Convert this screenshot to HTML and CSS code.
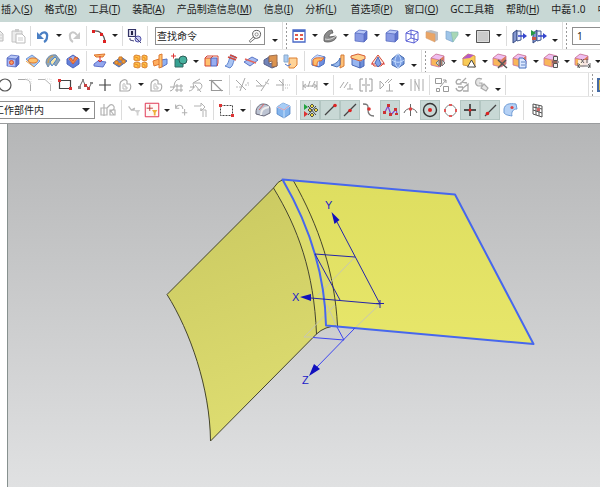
FILE: index.html
```html
<!DOCTYPE html>
<html lang="zh-CN">
<head>
<meta charset="utf-8">
<title>建模</title>
<link rel="stylesheet" href="styles.css">
</head>
<body>
<svg class="sprite" aria-hidden="true">
  <defs>
    <linearGradient id="sheetLeft" x1="0" y1="0" x2="0.2" y2="1"><stop offset="0" stop-color="#c9c860"/><stop offset="1" stop-color="#dddc70"/></linearGradient>
    <linearGradient id="sheetRight" x1="0" y1="0" x2="0" y2="1"><stop offset="0" stop-color="#dede60"/><stop offset="1" stop-color="#e7e66a"/></linearGradient>
  </defs>
  <symbol id="copy" viewBox="0 0 20 20"><path d="M6 5h6l3 3v7H6z" fill="#eee" stroke="#bbb"/><path d="M8 9h6M8 12h6" stroke="#ccc"/></symbol>
  <symbol id="paste" viewBox="0 0 20 20"><path d="M4 5h10v11H4z" fill="#ececec" stroke="#c4c4c4"/><path d="M7 3h4v3H7z" fill="#ccc"/><path d="M8 8h6l3 3v6H8z" fill="#fff" stroke="#bbb"/><path d="M10 12h5M10 14h5" stroke="#ccc"/></symbol>
  <symbol id="undo" viewBox="0 0 20 20"><path d="M7 9C11 4 15 7 14 11c0 2-1 4-3 5" fill="none" stroke="#4a7fc4" stroke-width="2.2"/><path d="M4 6v7h7z" fill="#4a7fc4"/></symbol>
  <symbol id="redo" viewBox="0 0 20 20"><path d="M13 9C9 4 5 7 6 11c0 2 1 4 3 5" fill="none" stroke="#c8c8c8" stroke-width="2"/><path d="M16 6v7H9z" fill="#c8c8c8"/></symbol>
  <symbol id="arc" viewBox="0 0 20 20"><path d="M4 5c7-1 11 3 12 11" fill="none" stroke="#555" stroke-width="1.3"/><path d="M3 4h3v3H3zM11 7h3v3h-3zM14 14h3v3h-3z" fill="#d22"/></symbol>
  <symbol id="wcs" viewBox="0 0 20 20"><path d="M3.500 3.500h7v7h-7z" fill="#dde" stroke="#336" stroke-width="1.2"/><path d="M6 5h2v4H6z" fill="#224"/><circle cx="13" cy="13" r="3" fill="#c6c8f0" stroke="#55a"/><path d="M5 12v2l4 1M10 11l6 6" fill="none" stroke="#447"/></symbol>
  <symbol id="fit" viewBox="0 0 20 20"><path d="M4 4h12v12H4z" fill="#fff" stroke="#4a6ac8" stroke-width="1.3"/><path d="M4 4h12v2H4z" fill="#4a6ac8"/><path d="M6 8h3v2H6zM11 8h3v2h-3zM6 12h3v2H6zM11 12h3v2h-3z" fill="#e0584a"/></symbol>
  <symbol id="orient" viewBox="0 0 20 20"><path d="M4 12c0-4 4-8 8-8l1 3c-3 0-4 2-4 4l7-1v2c-2 4-10 5-12 3z" fill="#8c8c8c" stroke="#555" stroke-width=".8"/><path d="M5 13c4 1 7 0 11-3" stroke="#ddd" fill="none"/></symbol>
  <symbol id="cube" viewBox="0 0 20 20"><path d="m4 7 4-3 8 1v8l-3 3-9-1z" fill="#8799e3"/><path d="m4 7 4-3 8 1-3 3z" fill="#b6c5f5"/><path d="m13 8 3-3v8l-3 3z" fill="#5f73cc"/><path d="m4 7 4-3 8 1v8l-3 3-9-1zM4 7l9 1v8M13 8l3-3" fill="none" stroke="#5065bd" stroke-width=".7"/></symbol>
  <symbol id="wire" viewBox="0 0 20 20"><path d="m4 7 5-3 7 2v8l-4 3-8-2zM4 7l8 2v8M12 9l4-3M9 4v8l-5 3M9 12l7 2" fill="none" stroke="#4a50d0" stroke-width=".9"/></symbol>
  <symbol id="section" viewBox="0 0 20 20"><path d="m4 5 5-1 7 2v8l-4 2V9L4 8z" fill="#b9bdc4"/><path d="m4 6 9 2v8l-9-4z" fill="#eaa565" stroke="#d8a070" stroke-width=".6"/></symbol>
  <symbol id="section2" viewBox="0 0 20 20"><path d="m4 5 7 2v9l-7-3z" fill="#9fc5e8" stroke="#7ba4cc" stroke-width=".7"/><path d="m9 6 7 0v3l-5 7z" fill="#a9d7b5" stroke="#8bb" stroke-width=".7"/></symbol>
  <symbol id="swatch" viewBox="0 0 20 20"><path d="M3.500 4.500h13v12h-13z" fill="#cacaca" stroke="#555"/><path d="M4.500 5.500h11v10h-11z" fill="none" stroke="#eee" stroke-width=".5"/></symbol>
  <symbol id="door" viewBox="0 0 20 20"><path d="m4 7 4-3v10l-4 3z" fill="#8497cf" stroke="#354982"/><path d="M8 5h4v9l-4 1z" fill="#e8edff" stroke="#445b91"/><path d="M9 10h6" stroke="#34c" stroke-width="1.5"/><path d="m14 7 4 3-4 3z" fill="#34c"/></symbol>
  <symbol id="door2" viewBox="0 0 20 20"><use href="#door"/><path d="m2 4 5 3-5 3z" fill="#259a42"/><path d="M3 11h4v3H3z" fill="#c54"/></symbol>
  <symbol id="search" viewBox="0 0 20 20"><circle cx="12" cy="8" r="5" fill="none" stroke="#555" stroke-width="1.2"/><circle cx="12" cy="8" r="2" fill="none" stroke="#777"/><path d="m8 11-5 5 1 2 6-5" fill="none" stroke="#555"/></symbol>

  <symbol id="extrude" viewBox="0 0 20 20"><use href="#cube"/><path d="M5 9h7v6H5z" fill="#aab8f3"/><circle cx="8.500" cy="11.500" r="2" fill="#f2a067" stroke="#d64a35"/></symbol>
  <symbol id="pad" viewBox="0 0 20 20"><path d="m3 8 6-4 8 6-6 6z" fill="#a9cbf5" stroke="#5c85cc" stroke-width=".8"/><ellipse cx="10" cy="9.500" rx="4.500" ry="2.500" fill="#ffc16a" stroke="#e47828"/><path d="m3 10 8 6" stroke="#e5a24c"/></symbol>
  <symbol id="shell" viewBox="0 0 20 20"><path d="M3 12c0-6 5-9 10-8l4 5-4 6c-3-3-6-3-8 1z" fill="#8ea5ba" stroke="#607c9b" stroke-width=".8"/><path d="m7 11 5-5 2 2-5 7z" fill="#f6e6ac" stroke="#4a86cd"/><path d="M5 12c0-4 2-6 5-7" fill="none" stroke="#e59b32"/></symbol>
  <symbol id="chamfer" viewBox="0 0 20 20"><path d="m4 8 6-4 6 4v5l-6 4-6-4z" fill="#637fd8" stroke="#4c66bd"/><path d="m5 8 5-3 5 3-5 5z" fill="#a9baf0"/><path d="m6 8 4 5 5-6-3-1-2 4-2-3z" fill="#ef8846" stroke="#d64c22" stroke-width=".8"/></symbol>
  <symbol id="project" viewBox="0 0 20 20"><path d="m4 4 11-1-2 3H6z" fill="#f9b36a" stroke="#df742d"/><path d="m4 13 4-3 8 1-3 5-9-1z" fill="#94a7ee" stroke="#5f73ca"/><path d="M10 5v6M8 9l2 2 2-2" fill="none" stroke="#d42f30"/></symbol>
  <symbol id="bumps" viewBox="0 0 20 20"><path d="m3 12 8-6 6 4-8 6z" fill="#6386d0" stroke="#4e6faf"/><path d="M5 10h3v3H5zM9 6h3v3H9zM12 9h3v3h-3zM8 12h3v2H8z" fill="#f4a13d" stroke="#d47a21"/></symbol>
  <symbol id="pattern" viewBox="0 0 20 20"><path d="m4 5 2-1 4 1v4L8 10 4 9zM12 5l2-1 3 1v4l-2 1-3-1zM4 12l2-1 4 1v4l-2 1-4-1zM12 12l2-1 3 1v4l-2 1-3-1z" fill="#ffc145" stroke="#d98133"/><path d="m5 6 3 1v2M13 6l2 1v2M5 13l3 1v2M13 13l2 1v2" fill="none" stroke="#eb8a2d"/></symbol>
  <symbol id="mirror" viewBox="0 0 20 20"><path d="m3 10 6-2 1 5-6 2z" fill="#ffae60" stroke="#df762f"/><path d="m11 9 6-1v5l-5 3z" fill="#8fb1f1" stroke="#5774c5"/><path d="m9 4 3-1v13l-3 1z" fill="#ffc36d" stroke="#df7a35"/></symbol>
  <symbol id="unite" viewBox="0 0 20 20"><path d="M5 8h8v8H5z" fill="#35a192" stroke="#376b65"/><circle cx="13" cy="9" r="4" fill="#47b19e" stroke="#2e5d58"/><path d="M1 5h5M3.500 2.500v5" stroke="#d33"/></symbol>
  <symbol id="boxes" viewBox="0 0 20 20"><path d="M4 7h6v8H4z" fill="#ffc16f" stroke="#d34634"/><path d="M10 7h6v8h-6z" fill="#98adf1" stroke="#5168c1"/><path d="m4 7 2-2h11v7l-1 3M10 7l2-2" fill="none" stroke="#d34634"/></symbol>
  <symbol id="ribbon" viewBox="0 0 20 20"><path d="M4 15c4-1 4-9 6-11l5 2c-3 2-2 9-6 11z" fill="#a9c4f2" stroke="#6185d0"/><path d="m7 6 8 3M9 4l7 3" stroke="#d34839" stroke-width="1.400"/></symbol>
  <symbol id="split" viewBox="0 0 20 20"><path d="m3 11 8-5 6 3-8 6z" fill="#a6bcf3" stroke="#5975c5"/><path d="m4 8 11 4" stroke="#e2655d" stroke-width="1.500"/></symbol>
  <symbol id="cup" viewBox="0 0 20 20"><path d="m3 9 5-3v7l8-2v4l-5 2-8-4z" fill="#7183b7" stroke="#565f87"/><path d="m8 5 8-1v11l-5 1v-6l-3 1z" fill="#dc9450" stroke="#9d6e4e"/></symbol>
  <symbol id="trim" viewBox="0 0 20 20"><path d="M8 7h8v7l-3 3H8z" fill="#ffd397" stroke="#dc7e30"/><path d="M3 4h4v7H3z" fill="#acccf2" stroke="#88a9cc"/><path d="m4 13 3 2 3-2" fill="none" stroke="#5276c7"/></symbol>
  <symbol id="blend" viewBox="0 0 20 20"><path d="m4 8 5-4 8 2-1 7-5 3-7-2z" fill="#6e8ddd" stroke="#496bbd"/><path d="m4 8 5-4 7 2-5 3v6l-6-1z" fill="#c3d6fb"/><path d="M5 9c2-3 6-2 11-2l-3 3c-3-1-4 1-4 5l-4-1z" fill="#ffbd67" stroke="#df6a31"/></symbol>
  <symbol id="corner" viewBox="0 0 20 20"><path d="M13 4h3v11l-4 2z" fill="#ffbf74" stroke="#d47c38"/><path d="M3 14c5-1 8-4 9-7v7l-3 2z" fill="#96b8ed" stroke="#4b72b6"/></symbol>
  <symbol id="sheetbox" viewBox="0 0 20 20"><path d="m4 6 8 2v9l-8-3z" fill="#98b6f0" stroke="#4a68b5"/><path d="m3 5 7-2 7 2v3l-5 2-9-3z" fill="#ffd28c" stroke="#d45c36"/><path d="M12 11v6l4-2V8" fill="#6e8fd8" stroke="#4b67b8"/></symbol>
  <symbol id="fan" viewBox="0 0 20 20"><path d="m4 12 6-8 6 8-3 3H6z" fill="#fbe7df" stroke="#d34a35"/><path d="m7 12 3-6 3 7-3 3z" fill="#83a3e7" stroke="#4c68b7"/><path d="M3 13h4M13 13h4" stroke="#d44"/></symbol>
  <symbol id="sphere" viewBox="0 0 20 20"><path d="m4 8 6-5 6 4v6l-6 4-6-3z" fill="#789ce1" stroke="#4166ac"/><path d="M4 9c4 3 8 3 12 0M10 3c-4 4-4 10 0 14M10 3c4 4 4 10 0 14" fill="none" stroke="#c4dcff"/></symbol>
  <symbol id="pink" viewBox="0 0 20 20"><path d="m3 7 5-4 8 2v8l-5 3-8-2z" fill="#f9b65a"/><path d="m3 7 5-4 8 2-5 4z" fill="#efbef1"/><path d="m11 9 5-4v8l-5 3z" fill="#d8795c"/><path d="m3 7 5-4 8 2v8l-5 3-8-2zM3 7l8 2v7" fill="none" stroke="#c6709d" stroke-width=".8"/></symbol>
  <symbol id="pinkmove" viewBox="0 0 20 20"><use href="#pink"/><path d="m8 12 3-3v6zM17 12l-3-3v6z" fill="#ddd" stroke="#777"/><path d="M12.500 8v8" stroke="#666"/></symbol>
  <symbol id="pinktri" viewBox="0 0 20 20"><path d="m4 7 5-4 7 2v11L4 14z" fill="#f8cb57" stroke="#d59a45"/><path d="m3 8 6-5 6 1-4 3z" fill="#b55bc5"/><path d="m12.500 9 4 7h-8z" fill="#fff" stroke="#444"/></symbol>
  <symbol id="pinkx" viewBox="0 0 20 20"><use href="#pink"/><path d="m8 9 9 8M16 9l-8 8" stroke="#555" stroke-width="1.500"/></symbol>
  <symbol id="pinkpage" viewBox="0 0 20 20"><use href="#pink"/><path d="M9 7h4l3 3v7H9z" fill="#dce8ff" stroke="#446fbd"/><path d="M11 11h4M11 14h4" stroke="#6386c5"/></symbol>
  <symbol id="pinkboxes" viewBox="0 0 20 20"><use href="#pink"/><path d="M12.500 5.500h4v4h-4zM12.500 12.500h4v4h-4z" fill="#eee" stroke="#555"/><path d="M11 11h7" stroke="#555"/></symbol>
  <symbol id="pinkdim" viewBox="0 0 20 20"><use href="#pink"/><path d="M6 9h12v8H6z" fill="#fff" opacity=".8"/><path d="m9 8 3 4M12 8l-3 4M15 8v4M6 12v5M18 12v5M6 15h12M8 13l-2 2 2 2M16 13l2 2-2 2" fill="none" stroke="#555" stroke-width=".9"/></symbol>

  <symbol id="circle" viewBox="0 0 20 20"><circle cx="10" cy="10" r="6" fill="none" stroke="#555" stroke-width="1.2"/></symbol>
  <symbol id="fillet" viewBox="0 0 20 20"><path d="M3 4.500h7c4 0 5 2 5.500 5V16" fill="none" stroke="#aaa"/><path d="M10 4h6v6" fill="none" stroke="#ddd" stroke-dasharray="1 1"/></symbol>
  <symbol id="cham" viewBox="0 0 20 20"><path d="M3 4.500h7l5.500 5V16" fill="none" stroke="#b6b6b6"/><path d="M10 4h6v6" fill="none" stroke="#ddd" stroke-dasharray="1 1"/></symbol>
  <symbol id="rect" viewBox="0 0 20 20"><path d="M4.500 5.500h11v8h-11z" fill="none" stroke="#444" stroke-width="1.200"/><path d="M3 4h3v3H3zM14 12h3v3h-3z" fill="#d33"/></symbol>
  <symbol id="profile" viewBox="0 0 20 20"><path d="m4 13 4-8 2 5 4 3 3-6" fill="none" stroke="#666"/><path d="M9 9h3v3H9zM12 12h3v3h-3z" fill="#c84040"/><path d="M3 11h3v3H3zM7 4h2v3H7zM15 7h3v2h-3z" fill="#888"/></symbol>
  <symbol id="plus" viewBox="0 0 20 20"><path d="M4 10h12M10 4v12" stroke="#444" stroke-width="1.200"/></symbol>
  <symbol id="offset" viewBox="0 0 20 20"><path d="M5 16V9c0-3 5-6 7-3v3h3c2 3 0 7-2 7z" fill="none" stroke="#aaa" stroke-width="1.200"/><path d="M8 13v-3c0-2 2-2 2 0v2h2v2H8z" fill="none" stroke="#bbb"/></symbol>
  <symbol id="curvegrid" viewBox="0 0 20 20"><path d="M4 16c7-1 1-11 10-12M4 12h5" fill="none" stroke="#aaa"/><path d="M10 10h2v2h-2zM14 10h2v2h-2zM10 14h2v2h-2zM14 14h2v2h-2z" fill="none" stroke="#aaa"/></symbol>
  <symbol id="curvemir" viewBox="0 0 20 20"><path d="M3 16c5-1 5-4 4-8l7-4M8 8h6c4 2 1 8-3 7M9 10l6 7M4 12h5" fill="none" stroke="#aaa"/></symbol>
  <symbol id="cross" viewBox="0 0 20 20"><path d="M3 5.500h13M5.500 5v10.500H17M5 5l11 11" fill="none" stroke="#999" stroke-width="1.200"/></symbol>
  <symbol id="qtrim" viewBox="0 0 20 20"><path d="m3 5 10 10M12 3 7 16" stroke="#aaa"/><path d="M12 10h4M14 8h3M3 12h5" stroke="#bbb" stroke-dasharray="2 1"/></symbol>
  <symbol id="qext" viewBox="0 0 20 20"><path d="m3 5 6 6M16 4l-8 12M3 11h8" stroke="#aaa"/><path d="m12 7 4 2" stroke="#bbb"/></symbol>
  <symbol id="corner2" viewBox="0 0 20 20"><path d="M3 10h8M10 4v12M6 5l5 5" stroke="#aaa"/><path d="M12 10h5M12 13h3" stroke="#bbb" stroke-dasharray="1 1"/></symbol>
  <symbol id="dim" viewBox="0 0 20 20"><path d="M3 6v9M17 6v9M3 11h14M6 9l-3 2 3 2M14 9l3 2-3 2M8 12l2-6M12 12l3-6" fill="none" stroke="#aaa"/></symbol>
  <symbol id="perp" viewBox="0 0 20 20"><path d="m4 13 4-6M8 13l4-6M11 14h6M14 9v5" stroke="#aaa"/></symbol>
  <symbol id="sym" viewBox="0 0 20 20"><path d="M7 4H4v12h3M13 4h3v12h-3M10 3v14M6 10h3M14 10h-3" fill="none" stroke="#999"/></symbol>
  <symbol id="show" viewBox="0 0 20 20"><path d="M4 6v8l4-4zM9 8l4-4M12 8l4-4M10 16h7M13.500 9v7" fill="none" stroke="#aaa"/></symbol>
  <symbol id="ladder" viewBox="0 0 20 20"><path d="M4 4v12M8 4v12M12 4v12M16 4v12M8 6l4 8" fill="none" stroke="#aaa"/></symbol>
  <symbol id="convert" viewBox="0 0 20 20"><path d="M3.500 3.500h6v5h-6zM4.500 13.500h3v3h-3zM11.500 11.500h5v5h-5zM8 12l6-7h-3M14 5v3" fill="none" stroke="#999"/></symbol>
  <symbol id="alt" viewBox="0 0 20 20"><path d="M9 5c-4-2-6 2-4 4h4V7M14 3l-4 4 5 1M4 13c1 4 6 4 7 0l5-4v7h-5M6 12h5" fill="none" stroke="#aaa" stroke-width="1.300"/></symbol>
  <symbol id="infer" viewBox="0 0 20 20"><path d="M10 4c-7-3-8 5-4 7h4V8H7M12 9l4 4-2 3-5-3z" fill="#e5e5e5" stroke="#aaa" stroke-width="1.200"/></symbol>
  <symbol id="bluebar" viewBox="0 0 20 20"><path d="M3 4h9v12H3z" fill="#d8b64c" stroke="#456ba5" stroke-width="2"/></symbol>

  <symbol id="asm" viewBox="0 0 20 20"><path d="M3 8h6v7H3zM6 4v12M9 8l3-3M11 6c3-3 6 0 5 3l-3 2M12 10l4 5M12 10h5v5h-5z" fill="none" stroke="#b3b3b3" stroke-width="1.200"/></symbol>
  <symbol id="filt" viewBox="0 0 20 20"><path d="m4 6 3 4 4-2M7 10h4" fill="none" stroke="#bbb" stroke-width="1.500"/><path d="M10 10h7l-2 3v3h-2v-3z" fill="#d2d2d2"/></symbol>
  <symbol id="filtred" viewBox="0 0 20 20"><path d="M2.500 2.500h15v15h-15z" fill="#fff8f6" stroke="#d24"/><path d="M4 8h7M7.500 4v7" stroke="#b33"/><path d="M10 10h6l-2 3v3h-2v-3z" fill="#eeb13c"/></symbol>
  <symbol id="rot" viewBox="0 0 20 20"><path d="M4 8c2-5 8-4 8 1M4 4v4h4M14 9v7M11 13h6" fill="none" stroke="#b3b3b3" stroke-width="1.200"/></symbol>
  <symbol id="rot2" viewBox="0 0 20 20"><path d="M4 6h7V3l4 4-4 4V8M10 10h6v7M13 11v6" fill="none" stroke="#b3b3b3"/></symbol>
  <symbol id="marquee" viewBox="0 0 20 20"><path d="M3.500 5.500h12v10h-12z" fill="none" stroke="#444" stroke-dasharray="2 1"/><path d="M2 4h3v3H2zM14 14h3v3h-3z" fill="#d33"/></symbol>
  <symbol id="graybox" viewBox="0 0 20 20"><path d="M3 12c0-5 4-8 7-8 4 0 7 2 7 5v4l-6 3-8-2z" fill="#bcc3d2" stroke="#667"/><path d="M8 15c0-5 2-7 8-8" fill="none" stroke="#eee" stroke-width="2"/><path d="m6 10 5-6" stroke="#d66"/></symbol>
  <symbol id="bluebox" viewBox="0 0 20 20"><path d="m4 7 6-4 7 3v8l-6 4-7-4z" fill="#84b5ed" stroke="#4379bf" stroke-width=".7"/><path d="m4 7 6-4 7 3-6 4z" fill="#a7cdf6"/><path d="m4 7 7 3v8M11 10l6-4" fill="none" stroke="#cbe2fb"/><path d="m5 7 6 3 5-4" fill="none" stroke="#dd8a9c" stroke-width=".8"/></symbol>
  <symbol id="snapall" viewBox="0 0 20 20"><path d="m4 4 4 3-4 3z" fill="#20a33d"/><path d="m4 11 4 3-4 3z" fill="#d33"/><path d="m12 4 2 2-2 2-2-2zM12 13l2 2-2 2-2-2zM8 10l2-2 2 2-2 2zM14 10l2-2 2 2-2 2z" fill="#efd83b" stroke="#333" stroke-width=".8"/><path d="m8 6 8 9M16 6l-8 9" stroke="#444"/></symbol>
  <symbol id="end" viewBox="0 0 20 20"><path d="m5 15 9-9" stroke="#444" stroke-width="1.300"/><circle cx="15" cy="5.500" r="1.800" fill="#d22"/></symbol>
  <symbol id="mid" viewBox="0 0 20 20"><path d="m4 16 12-12" stroke="#444" stroke-width="1.300"/><circle cx="10" cy="10.500" r="1.800" fill="#d22"/></symbol>
  <symbol id="ctrl" viewBox="0 0 20 20"><path d="M3 4c6 0 5 2 5 6s2 6 6 6" fill="none" stroke="#777" stroke-width="1.300"/><circle cx="9" cy="9" r="1.800" fill="#d33"/></symbol>
  <symbol id="spline" viewBox="0 0 20 20"><path d="M5 12 8 6l3 9 5-6 1 5" fill="none" stroke="#84c" stroke-width="1.200"/><path d="M3 11h3v3H3zM7 4h3v3H7zM9 13h3v3H9zM14 8h3v3h-3zM15 13h3v2h-3z" fill="#c33"/></symbol>
  <symbol id="inter" viewBox="0 0 20 20"><path d="M4 13c2-6 11-6 13 0M10.500 4v12" fill="none" stroke="#666"/><circle cx="10.500" cy="9" r="1.800" fill="#d44"/></symbol>
  <symbol id="center" viewBox="0 0 20 20"><circle cx="10" cy="10" r="6.500" fill="none" stroke="#333" stroke-width="1.400"/><circle cx="10" cy="10" r="2" fill="#d22"/></symbol>
  <symbol id="quad" viewBox="0 0 20 20"><circle cx="10.500" cy="10.500" r="5.500" fill="none" stroke="#888"/><path d="M9 4h3v2H9zM9 15h3v2H9zM4 9h2v3H4zM15 9h2v3h-2z" fill="#e05a5a"/></symbol>
  <symbol id="exist" viewBox="0 0 20 20"><path d="M4 10h12M10 4v12" stroke="#222" stroke-width="1.400"/><circle cx="10" cy="10" r="1.500" fill="#d22"/></symbol>
  <symbol id="oncurve" viewBox="0 0 20 20"><path d="m5 16 11-11" stroke="#444" stroke-width="1.300"/><circle cx="7.500" cy="13.500" r="1.800" fill="#d22"/></symbol>
  <symbol id="onface" viewBox="0 0 20 20"><path d="M4 9c1-5 5-6 12-5l1 5c-4 0-6 3-5 7-5-1-6-1-8-3z" fill="#b5d1f5" stroke="#6e9bd5"/><circle cx="12" cy="7.500" r="1.600" fill="#d44"/></symbol>
  <symbol id="gridpt" viewBox="0 0 20 20"><path d="m6 4 9 2v11l-9-3zM6 7l9 2M6 10l9 3M9 5v10M12 5v11" fill="none" stroke="#555"/><path d="M10 8h3v3h-3z" fill="#c66"/></symbol>
</svg>

<div class="app">
  <nav class="menu" aria-label="菜单">
    <a href="#">插入(<u>S</u>)</a><a href="#">格式(<u>R</u>)</a><a href="#">工具(<u>T</u>)</a><a href="#">装配(<u>A</u>)</a><a href="#">产品制造信息(<u>M</u>)</a><a href="#">信息(<u>I</u>)</a><a href="#">分析(<u>L</u>)</a><a href="#" class="spaced">首选项(<u>P</u>)</a><a href="#">窗口(<u>O</u>)</a><a href="#">GC工具箱</a><a href="#">帮助(<u>H</u>)</a><a href="#">中磊1.0</a><a href="#">中</a>
  </nav>

  <div class="bar tall first" role="toolbar" aria-label="标准">
    <button aria-label="复制"><svg><use href="#copy"/></svg></button>
    <button aria-label="粘贴"><svg><use href="#paste"/></svg></button>
    <i class="sep"></i>
    <button aria-label="撤消"><svg><use href="#undo"/></svg></button>
    <button class="drop" aria-label="撤消列表"></button>
    <button aria-label="重做"><svg><use href="#redo"/></svg></button>
    <i class="sep"></i>
    <button aria-label="圆弧"><svg><use href="#arc"/></svg></button>
    <button class="drop" aria-label="曲线列表"></button>
    <i class="sep"></i>
    <button aria-label="移动对象"><svg><use href="#wcs"/></svg></button>
    <i class="sep"></i>
    <label class="finder"><input type="text" value="查找命令" aria-label="查找命令"><svg><use href="#search"/></svg></label>
    <button class="drop low" aria-label="更多"></button>
    <i class="grip"></i>
    <button aria-label="适合窗口"><svg><use href="#fit"/></svg></button>
    <button class="drop" aria-label="视图列表"></button>
    <button aria-label="定向"><svg><use href="#orient"/></svg></button>
    <button class="drop" aria-label="定向列表"></button>
    <button aria-label="着色"><svg><use href="#cube"/></svg></button>
    <button class="drop" aria-label="着色列表"></button>
    <button aria-label="带边着色"><svg><use href="#cube"/></svg></button>
    <button aria-label="线框"><svg><use href="#wire"/></svg></button>
    <button aria-label="截面"><svg><use href="#section"/></svg></button>
    <button aria-label="编辑截面"><svg><use href="#section2"/></svg></button>
    <button class="drop" aria-label="截面列表"></button>
    <button aria-label="背景"><svg><use href="#swatch"/></svg></button>
    <button class="drop" aria-label="背景列表"></button>
    <i class="sep"></i>
    <button aria-label="退出"><svg><use href="#door"/></svg></button>
    <button aria-label="完成"><svg><use href="#door2"/></svg></button>
    <button class="drop low" aria-label="更多"></button>
    <i class="grip"></i>
    <input class="layer" type="text" value="1" aria-label="工作图层">
  </div>

  <div class="bar second" role="toolbar" aria-label="特征">
    <button aria-label="拉伸"><svg><use href="#extrude"/></svg></button>
    <button aria-label="凸台"><svg><use href="#pad"/></svg></button>
    <button aria-label="抽壳"><svg><use href="#shell"/></svg></button>
    <button aria-label="倒斜角"><svg><use href="#chamfer"/></svg></button>
    <i class="sep wide"></i>
    <button aria-label="投影"><svg><use href="#project"/></svg></button>
    <button aria-label="阵列面"><svg><use href="#bumps"/></svg></button>
    <button aria-label="阵列特征"><svg><use href="#pattern"/></svg></button>
    <button aria-label="镜像"><svg><use href="#mirror"/></svg></button>
    <button aria-label="合并"><svg><use href="#unite"/></svg></button>
    <button class="drop" aria-label="合并列表"></button>
    <button aria-label="拆分体"><svg><use href="#boxes"/></svg></button>
    <button aria-label="偏置面"><svg><use href="#ribbon"/></svg></button>
    <button aria-label="修剪片体"><svg><use href="#split"/></svg></button>
    <button aria-label="修剪体"><svg><use href="#cup"/></svg></button>
    <button aria-label="延伸"><svg><use href="#trim"/></svg></button>
    <i class="sep wide"></i>
    <button aria-label="边倒圆"><svg><use href="#blend"/></svg></button>
    <button aria-label="面倒圆"><svg><use href="#corner"/></svg></button>
    <button aria-label="加厚"><svg><use href="#sheetbox"/></svg></button>
    <button aria-label="拔模"><svg><use href="#fan"/></svg></button>
    <button aria-label="曲面"><svg><use href="#sphere"/></svg></button>
    <button class="drop low" aria-label="更多"></button>
    <i class="grip"></i>
    <button aria-label="移动面"><svg><use href="#pinkmove"/></svg></button>
    <button class="drop" aria-label="移动面列表"></button>
    <button aria-label="替换面"><svg><use href="#pinktri"/></svg></button>
    <button class="drop" aria-label="替换面列表"></button>
    <button aria-label="删除面"><svg><use href="#pinkx"/></svg></button>
    <button aria-label="复制面"><svg><use href="#pinkpage"/></svg></button>
    <button class="drop" aria-label="复制面列表"></button>
    <button aria-label="设为共面"><svg><use href="#pinkboxes"/></svg></button>
    <button class="drop" aria-label="共面列表"></button>
    <button aria-label="线性尺寸"><svg><use href="#pinkdim"/></svg></button>
    <button class="drop" aria-label="尺寸列表"></button>
  </div>

  <div class="bar third" role="toolbar" aria-label="草图">
    <button aria-label="圆"><svg><use href="#circle"/></svg></button>
    <button aria-label="圆角"><svg><use href="#fillet"/></svg></button>
    <button aria-label="倒角"><svg><use href="#cham"/></svg></button>
    <button aria-label="矩形"><svg><use href="#rect"/></svg></button>
    <button aria-label="艺术样条"><svg><use href="#profile"/></svg></button>
    <button aria-label="点"><svg><use href="#plus"/></svg></button>
    <button aria-label="偏置曲线"><svg><use href="#offset"/></svg></button>
    <button class="drop" aria-label="偏置列表"></button>
    <button aria-label="偏置"><svg><use href="#offset"/></svg></button>
    <button aria-label="阵列曲线"><svg><use href="#curvegrid"/></svg></button>
    <button aria-label="镜像曲线"><svg><use href="#curvemir"/></svg></button>
    <button aria-label="交点"><svg><use href="#cross"/></svg></button>
    <i class="sep wide"></i>
    <button aria-label="快速修剪"><svg><use href="#qtrim"/></svg></button>
    <button aria-label="快速延伸"><svg><use href="#qext"/></svg></button>
    <button aria-label="制作拐角"><svg><use href="#corner2"/></svg></button>
    <i class="sep wide"></i>
    <button aria-label="快速尺寸"><svg><use href="#dim"/></svg></button>
    <button class="drop" aria-label="快速尺寸列表"></button>
    <i class="sep"></i>
    <button aria-label="几何约束"><svg><use href="#perp"/></svg></button>
    <button aria-label="设为对称"><svg><use href="#sym"/></svg></button>
    <button aria-label="显示约束"><svg><use href="#show"/></svg></button>
    <button class="drop" aria-label="约束列表"></button>
    <button aria-label="自动尺寸"><svg><use href="#ladder"/></svg></button>
    <i class="sep"></i>
    <button aria-label="转换"><svg><use href="#convert"/></svg></button>
    <button aria-label="备选解"><svg><use href="#alt"/></svg></button>
    <button aria-label="推断"><svg><use href="#infer"/></svg></button>
    <button class="drop low" aria-label="更多"></button>
    <i class="sep"></i>
    <i class="grip last"></i>
    <button class="cut" aria-label="图层"><svg><use href="#bluebar"/></svg></button>
  </div>

  <div class="bar tall fourth" role="toolbar" aria-label="选择">
    <label class="scope"><select aria-label="选择范围"><option>在工作部件内</option></select></label>
    <button aria-label="装配约束"><svg><use href="#asm"/></svg></button>
    <i class="sep wide"></i>
    <button class="narrow" aria-label="过滤器"><svg><use href="#filt"/></svg></button>
    <button class="narrow" aria-label="类型过滤器"><svg><use href="#filtred"/></svg></button>
    <button class="drop" aria-label="过滤器列表"></button>
    <button class="narrow" aria-label="上一选择"><svg><use href="#rot"/></svg></button>
    <button aria-label="快速拾取"><svg><use href="#rot2"/></svg></button>
    <i class="sep wide"></i>
    <button aria-label="矩形选择"><svg><use href="#marquee"/></svg></button>
    <button class="drop" aria-label="矩形选择列表"></button>
    <i class="sep"></i>
    <button aria-label="隐藏"><svg><use href="#graybox"/></svg></button>
    <button aria-label="显示"><svg><use href="#bluebox"/></svg></button>
    <i class="sep wide"></i>
    <button class="on" aria-label="启用捕捉点"><svg><use href="#snapall"/></svg></button>
    <button class="on" aria-label="端点"><svg><use href="#end"/></svg></button>
    <button class="on" aria-label="中点"><svg><use href="#mid"/></svg></button>
    <button aria-label="控制点"><svg><use href="#ctrl"/></svg></button>
    <button class="on" aria-label="极点"><svg><use href="#spline"/></svg></button>
    <button aria-label="交点"><svg><use href="#inter"/></svg></button>
    <button class="on" aria-label="圆弧中心"><svg><use href="#center"/></svg></button>
    <button aria-label="象限点"><svg><use href="#quad"/></svg></button>
    <button class="on" aria-label="现有点"><svg><use href="#exist"/></svg></button>
    <button class="on" aria-label="曲线上的点"><svg><use href="#oncurve"/></svg></button>
    <button aria-label="面上的点"><svg><use href="#onface"/></svg></button>
    <i class="sep wide"></i>
    <button aria-label="栅格点"><svg><use href="#gridpt"/></svg></button>
  </div>

  <main class="view">
    <svg class="model" viewBox="8 124 592 363" preserveAspectRatio="xMinYMin meet" role="img" aria-label="模型">
      <path d="M167 294.500 273.500 188C298 228 314 272 316.500 334L210.500 441C210 388 190 331 167 294.500z" fill="url(#sheetLeft)"/>
      <path d="M282.500 179.500 455 194.500 533.500 344 326 325.500z" fill="url(#sheetRight)"/>
      <path d="M273.500 188Q278 181 283 179.500H293C319 226 335 274 337.500 326Q325 326 316.500 334C314 272 298 228 273.500 188z" fill="#dddc6c"/>
      <g fill="none" stroke="#45452d">
        <path d="M273.500 188 167 294.500C190 331 210 388 210.500 441L316.500 334C314 272 298 228 273.500 188Q278 181 283 179.500"/>
        <path d="M293 180C319 226 335 274 337.500 326Q325 326 316.500 334"/>
      </g>
      <g fill="none" stroke="#c7c6b4"><path d="m355 257-37 38M335 305l-31 32h9M380 304l-25 24M337 327l-10-22"/></g>
      <path d="M326 325.500C325 279 312 230 282.500 179.500L455 194.500 533.500 344z" fill="none" stroke="#4767ed" stroke-width="2" stroke-linejoin="round"/>
      <g fill="none" stroke="#2525a9"><path d="M380 304 337 222M380 304 311 298M376 303.500h8M380 300v8M355 257l-40-3 25 46"/></g>
      <g fill="none" stroke="#3d45f0"><path d="m355 328-40 41M313 337.500l31 2.500-7-13"/></g>
      <path d="m331.500 212 8 8-5 4zM300 297l11-3v7zM309 376l5-12 6 5z" fill="#1010be"/>
      <g class="axis"><text x="292" y="301">X</text><text x="325" y="209">Y</text><text x="302" y="384">Z</text></g>
    </svg>
  </main>
</div>
</body>
</html>
```
FILE: styles.css
```css
* { box-sizing: border-box; }

body {
  margin: 0;
  background: #fff;
  color: #222;
  font: 10px/14px "Noto Sans", "Noto Sans CJK SC", sans-serif;
}

.sprite { position: absolute; width: 0; height: 0; }

.app {
  display: flex;
  flex-direction: column;
  min-height: 100vh;
  overflow: hidden;
}

.menu {
  display: flex;
  gap: 12px;
  height: 22px;
  padding: 2px 0 0 1px;
  overflow: hidden;
  background: #c8d8d5;
}

.menu a {
  flex: none;
  color: #222;
  text-decoration: none;
  white-space: nowrap;
}

.menu .spaced { margin-left: 2px; }

.bar {
  display: flex;
  align-items: center;
  height: 23px;
  overflow: hidden;
  border-bottom: 1px solid #e6e6e6;
}

.bar.tall { height: 28px; }
.bar.first > button:first-child { margin-left: -12px; }
.bar.second { padding-left: 3px; }
.bar.third { height: 24px; }
.bar.third > button:first-child { margin-left: -5px; }
.bar.fourth { height: 27px; border-bottom-color: #9a9c9e; }

button {
  flex: none;
  width: 20px;
  height: 20px;
  padding: 0;
  border: 0;
  background: none;
}

button svg { display: block; width: 100%; height: 100%; }
button.narrow { width: 18px; }
button.on { background: #c8d8d5; outline: 1px solid #b3c6c2; outline-offset: -1px; }

.drop {
  display: flex;
  align-items: center;
  justify-content: center;
  width: 11px;
}

.drop::before {
  content: "";
  border: 3px solid transparent;
  border-top-color: #222;
  border-bottom: 0;
}

.drop.low { align-items: flex-end; padding-bottom: 4px; }

.sep {
  flex: none;
  width: 5px;
  height: 20px;
  background: linear-gradient(#dcdcdc, #dcdcdc) center / 1px 100% no-repeat;
}

.sep.wide { width: 7px; }

.grip {
  flex: none;
  width: 7px;
  height: 100%;
  margin-left: 2px;
  border-left: 1px solid #dedede;
  background: radial-gradient(circle, #999 1px, transparent 1px) right 1px top / 3px 4px repeat-y;
}

.grip.last { margin-left: auto; }
.cut { width: 5px; overflow: hidden; }
.cut svg { width: 20px; }

.finder {
  display: flex;
  flex: none;
  align-items: center;
  width: 110px;
  height: 18px;
  margin: 0 4px 0 5px;
  border: 1px solid #8f8f8f;
}

.finder svg { flex: none; width: 18px; height: 16px; }

input, select {
  min-width: 0;
  border: 0;
  border-radius: 0;
  outline: 0;
  background: #fff;
  color: #222;
  font: inherit;
}

.finder input { flex: 1; padding: 0 1px; }

.layer {
  flex: 1 0 40px;
  height: 18px;
  margin-left: 3px;
  padding: 0 4px;
  border: 1px solid #8f8f8f;
}

.scope {
  position: relative;
  flex: none;
  width: 115px;
  height: 18px;
  margin: 0 3px 0 -20px;
}

.scope select {
  appearance: none;
  width: 100%;
  height: 100%;
  padding: 0 3px;
  border: 1px solid #8f8f8f;
}

.scope::after {
  content: "";
  position: absolute;
  top: 7px;
  right: 5px;
  border: 4px solid transparent;
  border-top-color: #222;
  border-bottom: 0;
  pointer-events: none;
}

.view {
  flex: 1;
  margin-left: 7px;
  border-left: 1px solid #87918f;
  background: linear-gradient(#b5b6b7, #e0e1e2);
}

.model { display: block; width: 100%; }

.axis {
  fill: #2020c8;
  font: 11px "Liberation Sans", sans-serif;
}
```
